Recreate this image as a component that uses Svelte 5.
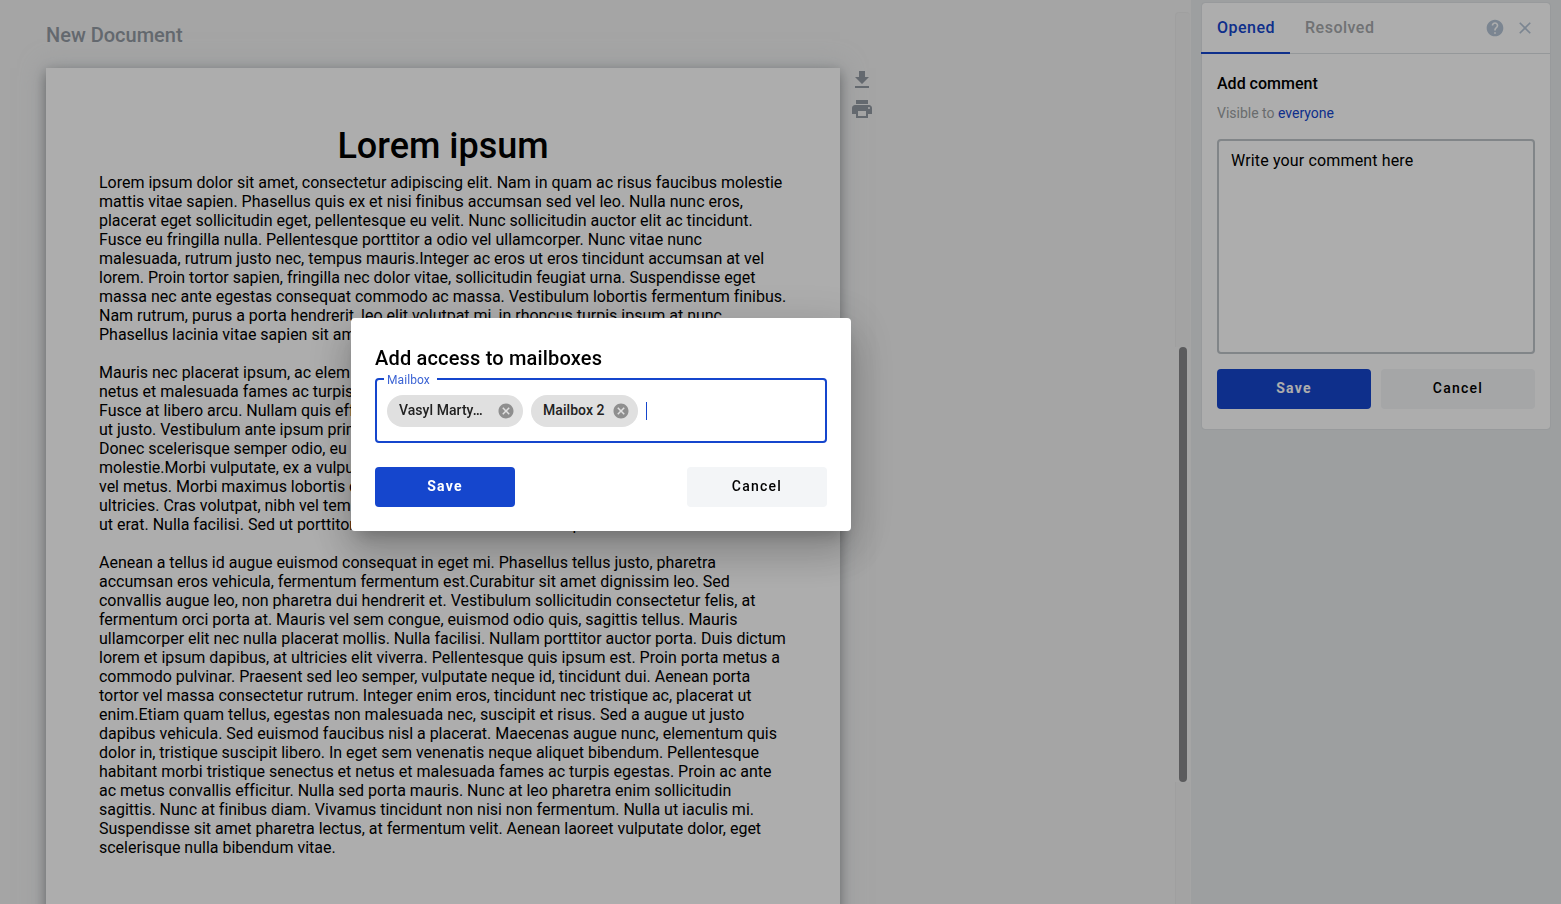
<script>
  const paragraphs = [
    [
      'Lorem ipsum dolor sit amet, consectetur adipiscing elit. Nam in quam ac risus faucibus molestie',
      'mattis vitae sapien. Phasellus quis ex et nisi finibus accumsan sed vel leo. Nulla nunc eros,',
      'placerat eget sollicitudin eget, pellentesque eu velit. Nunc sollicitudin auctor elit ac tincidunt.',
      'Fusce eu fringilla nulla. Pellentesque porttitor a odio vel ullamcorper. Nunc vitae nunc',
      'malesuada, rutrum justo nec, tempus mauris.Integer ac eros ut eros tincidunt accumsan at vel',
      'lorem. Proin tortor sapien, fringilla nec dolor vitae, sollicitudin feugiat urna. Suspendisse eget',
      'massa nec ante egestas consequat commodo ac massa. Vestibulum lobortis fermentum finibus.',
      'Nam rutrum, purus a porta hendrerit, leo elit volutpat mi, in rhoncus turpis ipsum at nunc.',
      'Phasellus lacinia vitae sapien sit amet.'
    ],
    [
      'Mauris nec placerat ipsum, ac elem',
      'netus et malesuada fames ac turpis',
      'Fusce at libero arcu. Nullam quis eff',
      'ut justo. Vestibulum ante ipsum prim',
      'Donec scelerisque semper odio, eu m',
      'molestie.Morbi vulputate, ex a vulpu',
      'vel metus. Morbi maximus lobortis d',
      'ultricies. Cras volutpat, nibh vel tem',
      'ut erat. Nulla facilisi. Sed ut porttitor nibh a mollis dui id nullas semper.'
    ],
    [
      'Aenean a tellus id augue euismod consequat in eget mi. Phasellus tellus justo, pharetra',
      'accumsan eros vehicula, fermentum fermentum est.Curabitur sit amet dignissim leo. Sed',
      'convallis augue leo, non pharetra dui hendrerit et. Vestibulum sollicitudin consectetur felis, at',
      'fermentum orci porta at. Mauris vel sem congue, euismod odio quis, sagittis tellus. Mauris',
      'ullamcorper elit nec nulla placerat mollis. Nulla facilisi. Nullam porttitor auctor porta. Duis dictum',
      'lorem et ipsum dapibus, at ultricies elit viverra. Pellentesque quis ipsum est. Proin porta metus a',
      'commodo pulvinar. Praesent sed leo semper, vulputate neque id, tincidunt dui. Aenean porta',
      'tortor vel massa consectetur rutrum. Integer enim eros, tincidunt nec tristique ac, placerat ut',
      'enim.Etiam quam tellus, egestas non malesuada nec, suscipit et risus. Sed a augue ut justo',
      'dapibus vehicula. Sed euismod faucibus nisl a placerat. Maecenas augue nunc, elementum quis',
      'dolor in, tristique suscipit libero. In eget sem venenatis neque aliquet bibendum. Pellentesque',
      'habitant morbi tristique senectus et netus et malesuada fames ac turpis egestas. Proin ac ante',
      'ac metus convallis efficitur. Nulla sed porta mauris. Nunc at leo pharetra enim sollicitudin',
      'sagittis. Nunc at finibus diam. Vivamus tincidunt non nisi non fermentum. Nulla ut iaculis mi.',
      'Suspendisse sit amet pharetra lectus, at fermentum velit. Aenean laoreet vulputate dolor, eget',
      'scelerisque nulla bibendum vitae.'
    ]
  ];
  const chips = ['Vasyl Marty…', 'Mailbox 2'];
</script>

<div class="app">
  <main class="workspace">
    <h2 class="doc-name">New Document</h2>
    <div class="doc-row">
      <article class="page">
        <h1>Lorem ipsum</h1>
        {#each paragraphs as lines}
          <div class="para">
            {#each lines as line}<div>{line}</div>{/each}
          </div>
        {/each}
      </article>
      <div class="tools">
        <svg viewBox="0 0 24 24" width="24" height="24"><path d="M19 9h-4V3H9v6H5l7 7 7-7zM5 18v2h14v-2H5z" /></svg>
        <svg viewBox="0 0 24 24" width="24" height="24"><path d="M19 8H5c-1.66 0-3 1.34-3 3v6h4v4h12v-4h4v-6c0-1.66-1.34-3-3-3zm-3 11H8v-5h8v5zm3-7c-.55 0-1-.45-1-1s.45-1 1-1 1 .45 1 1-.45 1-1 1zm-1-9H6v4h12V3z" /></svg>
      </div>
    </div>
  </main>
  <div class="scrollbar">
    <div class="track"></div>
    <div class="thumb"></div>
    <div class="track end"></div>
  </div>
  <aside>
    <section class="card">
      <header>
        <span class="tab active">Opened</span>
        <span class="tab">Resolved</span>
        <div class="head-icons">
          <svg viewBox="0 0 24 24" width="20" height="20"><path d="M12 2C6.48 2 2 6.48 2 12s4.480 10 10 10 10-4.480 10-10S17.520 2 12 2zm1 17h-2v-2h2v2zm2.070-7.750l-.9.920C13.450 12.900 13 13.500 13 15h-2v-.5c0-1.100.45-2.100 1.170-2.830l1.240-1.260c.37-.36.590-.86.590-1.410 0-1.100-.9-2-2-2s-2 .9-2 2H8c0-2.210 1.790-4 4-4s4 1.790 4 4c0 .88-.36 1.680-.93 2.250z" /></svg>
          <svg viewBox="0 0 24 24" width="20" height="20"><path d="M19 6.410L17.590 5 12 10.590 6.410 5 5 6.410 10.590 12 5 17.590 6.410 19 12 13.410 17.590 19 19 17.590 13.410 12z" /></svg>
        </div>
      </header>
      <div class="card-body">
        <h3>Add comment</h3>
        <p>Visible to <a>everyone</a></p>
        <div class="comment">Write your comment here</div>
        <div class="actions">
          <button class="primary">Save</button>
          <button>Cancel</button>
        </div>
      </div>
    </section>
  </aside>
</div>

<div class="overlay">
  <div class="dialog" role="dialog">
    <h2>Add access to mailboxes</h2>
    <fieldset>
      <legend>Mailbox</legend>
      <div class="chips">
        {#each chips as chip}
          <span class="chip">
            <span class="chip-text">{chip}</span>
            <svg viewBox="0 0 24 24" width="18" height="18"><path d="M12 2C6.470 2 2 6.470 2 12s4.470 10 10 10 10-4.470 10-10S17.530 2 12 2zm5 13.590L15.590 17 12 13.410 8.410 17 7 15.590 10.590 12 7 8.410 8.410 7 12 10.590 15.590 7 17 8.410 13.410 12 17 15.590z" /></svg>
          </span>
        {/each}
        <span class="caret"></span>
      </div>
    </fieldset>
    <div class="dialog-actions">
      <button class="primary">Save</button>
      <button>Cancel</button>
    </div>
  </div>
</div>

<style>
  :global(body) { margin: 0; overflow: hidden; font-family: Roboto, sans-serif; }
  * { box-sizing: border-box; }
  h1, h2, h3, p { margin: 0; }
  .app { display: flex; width: 1561px; height: 904px; overflow: hidden; background: #e7eaec; color: #000; }
  .workspace { width: 1175px; height: 904px; overflow: hidden; padding: 23px 0 0 46px; background: #f3f3f3; }
  .doc-name { height: 24px; font-size: 20px; line-height: 24px; font-weight: 500; color: #949ba4; }
  .doc-row { display: flex; gap: 10px; margin-top: 21px; }
  .page { width: 794px; height: 1123px; padding: 53px; background: #fff; box-shadow: 0 4px 12px rgba(0, 0, 0, .35), 0 0 24px rgba(203, 213, 221, .5); }
  h1 { margin-top: 4px; font-size: 36px; line-height: 42px; font-weight: 500; text-align: center; }
  .para { margin-bottom: 19px; font-size: 16px; line-height: 19px; letter-spacing: -.006px; white-space: nowrap; }
  h1 + .para { margin-top: 6px; }
  .tools { display: flex; flex-direction: column; gap: 5px; fill: #949ba4; }
  svg { display: block; flex: none; }
  .scrollbar { width: 16px; display: flex; flex-direction: column; align-items: center; padding-top: 12px; background: #f3f3f3; }
  .track { width: 15px; height: 335px; align-self: flex-start; background: #f0f0f0; border: 1px solid #ebebeb; border-width: 1px 0 0 1px; border-radius: 4px 4px 0 0; }
  .thumb { width: 8px; height: 435px; border-radius: 4px; background: #868789; }
  .track.end { height: 122px; border-radius: 0; border-top: 0; }
  aside { flex: 1; padding: 3px 0 0 11px; }
  .card { width: 348px; height: 426px; background: #fff; border-radius: 3px; box-shadow: 0 0 1px rgba(100, 110, 120, .4); }
  header { display: flex; height: 51px; border-bottom: 1px solid #dce0e4; }
  .tab { height: 51px; padding: 0 15px; line-height: 49px; font-size: 16px; font-weight: 500; letter-spacing: .5px; color: #a5a8ab; }
  .tab.active { width: 89px; margin-left: -1px; padding: 0 0 0 16px; color: #1546cd; border-bottom: 2px solid #1546cd; }
  .head-icons { display: flex; gap: 10px; margin: 15px 15px 0 auto; fill: #b5c5d6; }
  .card-body { padding: 18px 15px 0; }
  h3 { font-size: 16px; line-height: 24px; font-weight: 500; }
  p { margin-top: 7px; font-size: 14px; line-height: 20px; color: #9b9fa2; }
  a { color: #1546cd; }
  .comment { height: 215px; margin-top: 16px; padding: 10px 12px; border: 2px solid #bec4c9; border-radius: 4px; font-size: 16px; line-height: 19px; letter-spacing: .15px; }
  .actions { display: grid; grid-template-columns: 1fr 1fr; gap: 10px; margin-top: 15px; }
  button { height: 40px; padding: 0 0 2px; border: 0; border-radius: 4px; background: #f3f5f7; color: #000; font: 500 14px/20px Roboto, sans-serif; letter-spacing: 1.25px; }
  .primary { background: #1546cd; color: #fff; font-weight: 700; }
  .overlay { position: fixed; inset: 0; background: rgba(0, 0, 0, .32); }
  .dialog { position: absolute; left: 351px; top: 318px; width: 500px; height: 213px; padding: 27px 24px 24px; background: #fff; border-radius: 4px; box-shadow: 0 11px 15px -7px rgba(0, 0, 0, .2), 0 24px 38px 3px rgba(0, 0, 0, .14), 0 9px 46px 8px rgba(0, 0, 0, .12); }
  .dialog h2 { font-size: 20px; line-height: 26px; font-weight: 500; letter-spacing: .18px; }
  fieldset { display: block; height: 72px; margin: 0; padding: 0 10px; border: 2px solid #1546cd; border-radius: 4px; min-width: 0; }
  legend { height: 16px; margin-left: -3px; padding: 0 7px 0 3px; color: #3c64d4; font-size: 12px; line-height: 18px; letter-spacing: .08px; }
  .chips { display: flex; align-items: center; gap: 8px; margin-top: 8px; }
  .chip { display: flex; align-items: center; gap: 8px; height: 32px; padding: 0 8px 0 12px; border-radius: 16px; background: #e0e0e0; color: #212121; font-size: 14px; font-weight: 500; letter-spacing: .05px; }
  .chip-text { width: 61px; height: 20px; line-height: 18px; white-space: nowrap; }
  .chip:first-child .chip-text { width: 90px; }
  .chip svg { fill: #8e8e8e; }
  .caret { width: 1px; height: 18px; background: #1546cd; }
  .dialog-actions { display: flex; justify-content: space-between; margin-top: 24px; }
  .dialog-actions button { width: 140px; }
</style>
